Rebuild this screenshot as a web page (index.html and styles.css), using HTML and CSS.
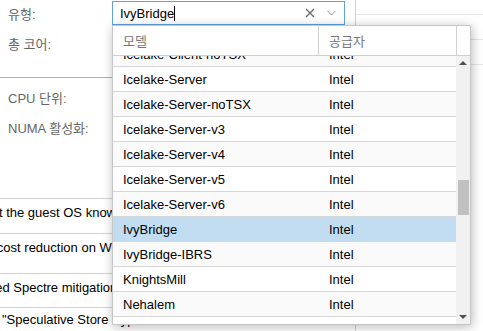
FILE: index.html
```html
<!DOCTYPE html>
<html lang="ko">
  <head>
    <meta charset="UTF-8" />
    <meta name="viewport" content="width=device-width, initial-scale=1" />
    <title>CPU</title>
    <link rel="stylesheet" href="styles.css">
  </head>
  <body>

    <div class="dialog">

      <div class="left-panel">

        <div class="field first">
          <div class="label">유형:</div>
          <div class="combo">
            <span class="combo-text">IvyBridge</span><span class="caret"></span>
            <span class="combo-clear">
              <svg width="10" height="10" viewBox="0 0 10 10"><path d="M1 1 L9 9 M9 1 L1 9" stroke="#666" stroke-width="1.2" fill="none"/></svg>
            </span>
            <span class="combo-trigger">
              <svg width="9" height="6" viewBox="0 0 9 6"><path d="M0.5 1 L4.5 5 L8.5 1" stroke="#999" stroke-width="1" fill="none"/></svg>
            </span>
          </div>
        </div>

        <div class="field">
          <div class="label">총 코어:</div>
        </div>

        <div class="separator"></div>

        <div class="field">
          <div class="label">CPU 단위:</div>
        </div>

        <div class="field">
          <div class="label">NUMA 활성화:</div>
        </div>

        <div class="flag-grid">
          <div class="flag-row r1"><span class="flag-text">Required to let the guest OS know if MDS is mitigated correctly</span></div>
          <div class="flag-row r2"><span class="flag-text">Meltdown fix cost reduction on Westmere, Sandy-, and IvyBridge Intel CPUs</span></div>
          <div class="flag-row r3"><span class="flag-text">Allows improved Spectre mitigation with Intel CPUs</span></div>
          <div class="flag-row r4"><span class="flag-text">Protection for "Speculative Store Bypass" for Intel models</span></div>
        </div>

      </div>

      <div class="right-panel">
        <div class="right-row top"></div>
        <div class="right-row"></div>
        <div class="right-row"></div>
      </div>

      <!-- combo dropdown list -->
      <div class="boundlist">

        <div class="bl-header">
          <div class="bl-col model">모델</div>
          <div class="bl-col vendor">공급자</div>
          <div class="bl-col spacer"></div>
        </div>

        <div class="bl-body">
          <div class="bl-rows">
            <div class="bl-row alt"><div class="cell model">Icelake-Client-noTSX</div><div class="cell">Intel</div></div>
            <div class="bl-row"><div class="cell model">Icelake-Server</div><div class="cell">Intel</div></div>
            <div class="bl-row alt"><div class="cell model">Icelake-Server-noTSX</div><div class="cell">Intel</div></div>
            <div class="bl-row"><div class="cell model">Icelake-Server-v3</div><div class="cell">Intel</div></div>
            <div class="bl-row alt"><div class="cell model">Icelake-Server-v4</div><div class="cell">Intel</div></div>
            <div class="bl-row"><div class="cell model">Icelake-Server-v5</div><div class="cell">Intel</div></div>
            <div class="bl-row alt"><div class="cell model">Icelake-Server-v6</div><div class="cell">Intel</div></div>
            <div class="bl-row selected"><div class="cell model">IvyBridge</div><div class="cell">Intel</div></div>
            <div class="bl-row alt"><div class="cell model">IvyBridge-IBRS</div><div class="cell">Intel</div></div>
            <div class="bl-row"><div class="cell model">KnightsMill</div><div class="cell">Intel</div></div>
            <div class="bl-row alt"><div class="cell model">Nehalem</div><div class="cell">Intel</div></div>
            <div class="bl-row"><div class="cell model">Nehalem-IBRS</div><div class="cell">Intel</div></div>
          </div>

          <div class="scrollbar">
            <div class="sb-arrow"><span class="tri-up"></span></div>
            <div class="sb-track"><div class="sb-thumb"></div></div>
            <div class="sb-arrow"><span class="tri-down"></span></div>
          </div>
        </div>

      </div>

    </div>

  </body>
</html>
```

FILE: styles.css
```css
body{
  margin: 0;
  background: #FFFFFF;
  font-family: "Liberation Sans", "Noto Sans CJK KR", sans-serif;
  font-size: 13px;
  color: #000000;
  overflow: hidden;
}

.dialog{
  position: relative;
  display: flex;
  width: 483px;
  height: 331px;
  overflow: hidden;
}

.left-panel{
  width: 355px;
  flex-shrink: 0;
  border-right: 1px solid #d0d0d0;
  padding-top: 1px;
}

.field{
  display: flex;
  align-items: center;
  height: 24px;
  margin-bottom: 6px;
}

.field + .separator{
  margin-top: 22px;
}

.label{
  width: 104px;
  padding-left: 8px;
  color: #666666;
}

.combo{
  display: flex;
  align-items: center;
  width: 231px;
  height: 22px;
  border: 1px solid #5fa2dd;
  background: #FFFFFF;
}

.combo-text{
  padding-left: 7px;
}

.caret{
  width: 1px;
  height: 15px;
  background: #000000;
}

.combo-clear{
  display: flex;
  margin-left: auto;
  margin-right: 12px;
}

.combo-trigger{
  display: flex;
  margin-right: 8px;
}

.separator{
  height: 1px;
  background: #b0b0b0;
  margin-bottom: 7px;
}

.flag-grid{
  margin-top: 59px;
  border-top: 1px solid #d3d3d3;
}

.flag-row{
  border-bottom: 1px solid #d3d3d3;
  white-space: nowrap;
  overflow: hidden;
  line-height: 16px;
  padding-top: 6px;
}

.r1{ height: 28px; }
.r2{ height: 33px; }
.r3{ height: 27px; }
.r4{ height: 30px; padding-top: 4px; }

.flag-text{
  display: inline-block;
  margin-left: -79px;
}

.r1 .flag-text{ margin-left: -82px; }
.r3 .flag-text{ margin-left: -85px; }

.right-panel{
  flex: 1;
}

.right-row{
  height: 24px;
  border-bottom: 1px solid #e6e6e6;
}

.right-row.top{
  height: 14px;
}

/* dropdown */

.boundlist{
  position: absolute;
  z-index: 10;
  left: 112px;
  top: 25px;
  width: 357px;
  height: 298px;
  border: 1px solid #c6c6c6;
  background: #FFFFFF;
  box-shadow: 1px 2px 10px rgba(0, 0, 0, 0.28);
  display: flex;
  flex-direction: column;
}

.bl-header{
  display: flex;
  height: 29px;
  border-bottom: 1px solid #d0d0d0;
  color: #777777;
}

.bl-col{
  display: flex;
  align-items: center;
  padding-left: 10px;
  border-right: 1px solid #d0d0d0;
}

.bl-col.model{
  width: 195px;
}

.bl-col.vendor{
  width: 127px;
}

.bl-col.spacer{
  flex: 1;
  padding: 0;
  border-right: none;
}

.bl-body{
  flex: 1;
  display: flex;
  overflow: hidden;
}

.bl-rows{
  flex: 1;
  margin-top: -14px;
}

.bl-row{
  display: flex;
  height: 24px;
  align-items: center;
  border-bottom: 1px solid #d6d6d6;
  background: #FFFFFF;
}

.bl-row.alt{
  background: #fafafa;
}

.bl-row.selected{
  background: #c2ddf2;
  border-bottom-color: #c2ddf2;
}

.cell{
  padding-left: 10px;
}

.cell.model{
  width: 196px;
}

.scrollbar{
  width: 14px;
  background: #f1f1f1;
  display: flex;
  flex-direction: column;
}

.sb-arrow{
  height: 14px;
  display: flex;
  align-items: center;
  justify-content: center;
}

.tri-up{
  border-left: 4px solid transparent;
  border-right: 4px solid transparent;
  border-bottom: 4px solid #505050;
}

.tri-down{
  border-left: 4px solid transparent;
  border-right: 4px solid transparent;
  border-top: 4px solid #505050;
}

.sb-track{
  flex: 1;
  padding-top: 110px;
}

.sb-thumb{
  width: 11px;
  height: 35px;
  margin-left: 2px;
  background: #c1c1c1;
}
```
